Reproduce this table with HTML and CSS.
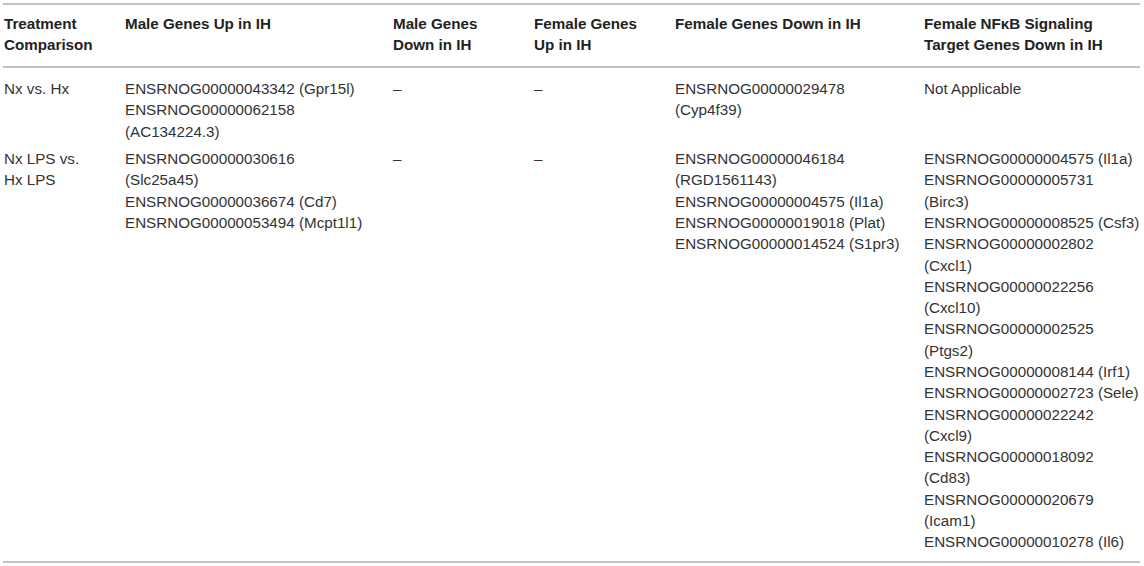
FILE: index.html
```html
<!DOCTYPE html>
<html lang="en">
<head>
<meta charset="utf-8">
<title>Differentially expressed genes</title>
<link rel="stylesheet" href="styles.css">
</head>
<body>
<table class="genes">
  <colgroup>
    <col class="c1"><col class="c2"><col class="c3"><col class="c4"><col class="c5"><col class="c6">
  </colgroup>
  <thead>
    <tr>
      <th>Treatment<br>Comparison</th>
      <th>Male Genes Up in IH</th>
      <th>Male Genes<br>Down in IH</th>
      <th>Female Genes<br>Up in IH</th>
      <th>Female Genes Down in IH</th>
      <th>Female NFκB Signaling<br>Target Genes Down in IH</th>
    </tr>
  </thead>
  <tbody>
    <tr class="first">
      <td>Nx vs. Hx</td>
      <td>ENSRNOG00000043342 (Gpr15l)<br>ENSRNOG00000062158<br>(AC134224.3)</td>
      <td>–</td>
      <td>–</td>
      <td>ENSRNOG00000029478<br>(Cyp4f39)</td>
      <td>Not Applicable</td>
    </tr>
    <tr class="last">
      <td>Nx LPS vs.<br>Hx LPS</td>
      <td>ENSRNOG00000030616<br>(Slc25a45)<br>ENSRNOG00000036674 (Cd7)<br>ENSRNOG00000053494 (Mcpt1l1)</td>
      <td>–</td>
      <td>–</td>
      <td>ENSRNOG00000046184<br>(RGD1561143)<br>ENSRNOG00000004575 (Il1a)<br>ENSRNOG00000019018 (Plat)<br>ENSRNOG00000014524 (S1pr3)</td>
      <td>ENSRNOG00000004575 (Il1a)<br>ENSRNOG00000005731<br>(Birc3)<br>ENSRNOG00000008525 (Csf3)<br>ENSRNOG00000002802<br>(Cxcl1)<br>ENSRNOG00000022256<br>(Cxcl10)<br>ENSRNOG00000002525<br>(Ptgs2)<br>ENSRNOG00000008144 (Irf1)<br>ENSRNOG00000002723 (Sele)<br>ENSRNOG00000022242<br>(Cxcl9)<br>ENSRNOG00000018092<br>(Cd83)<br>ENSRNOG00000020679<br>(Icam1)<br>ENSRNOG00000010278 (Il6)</td>
    </tr>
  </tbody>
</table>
</body>
</html>
```
FILE: styles.css
```css
html, body {
  margin: 0;
  padding: 0;
  background: #ffffff;
}

body {
  font-family: "Liberation Sans", Arial, Helvetica, sans-serif;
  font-size: 15.2px;
  line-height: 21.28px;
  color: #333333;
}

.genes {
  margin: 3px 0 0 3px;
  width: 1137px;
  table-layout: fixed;
  border-collapse: separate;
  border-spacing: 0;
}

.c1 { width: 122px; }
.c2 { width: 268px; }
.c3 { width: 141px; }
.c4 { width: 141px; }
.c5 { width: 249px; }
.c6 { width: 216px; }

.genes th,
.genes td {
  text-align: left;
  vertical-align: top;
  padding: 0;
  white-space: nowrap;
}

.genes th:first-child,
.genes td:first-child {
  padding-left: 1px;
}

.genes th {
  font-weight: bold;
  color: #222222;
  padding-top: 7.6px;
  padding-bottom: 10.8px;
  border-top: 2px solid #c2c2c2;
  border-bottom: 2px solid #c2c2c2;
}

.genes tr.first td {
  padding-top: 10px;
  padding-bottom: 3.2px;
}

.genes tr.last td {
  padding-top: 3.2px;
  padding-bottom: 8.5px;
  border-bottom: 2px solid #c2c2c2;
}
```
